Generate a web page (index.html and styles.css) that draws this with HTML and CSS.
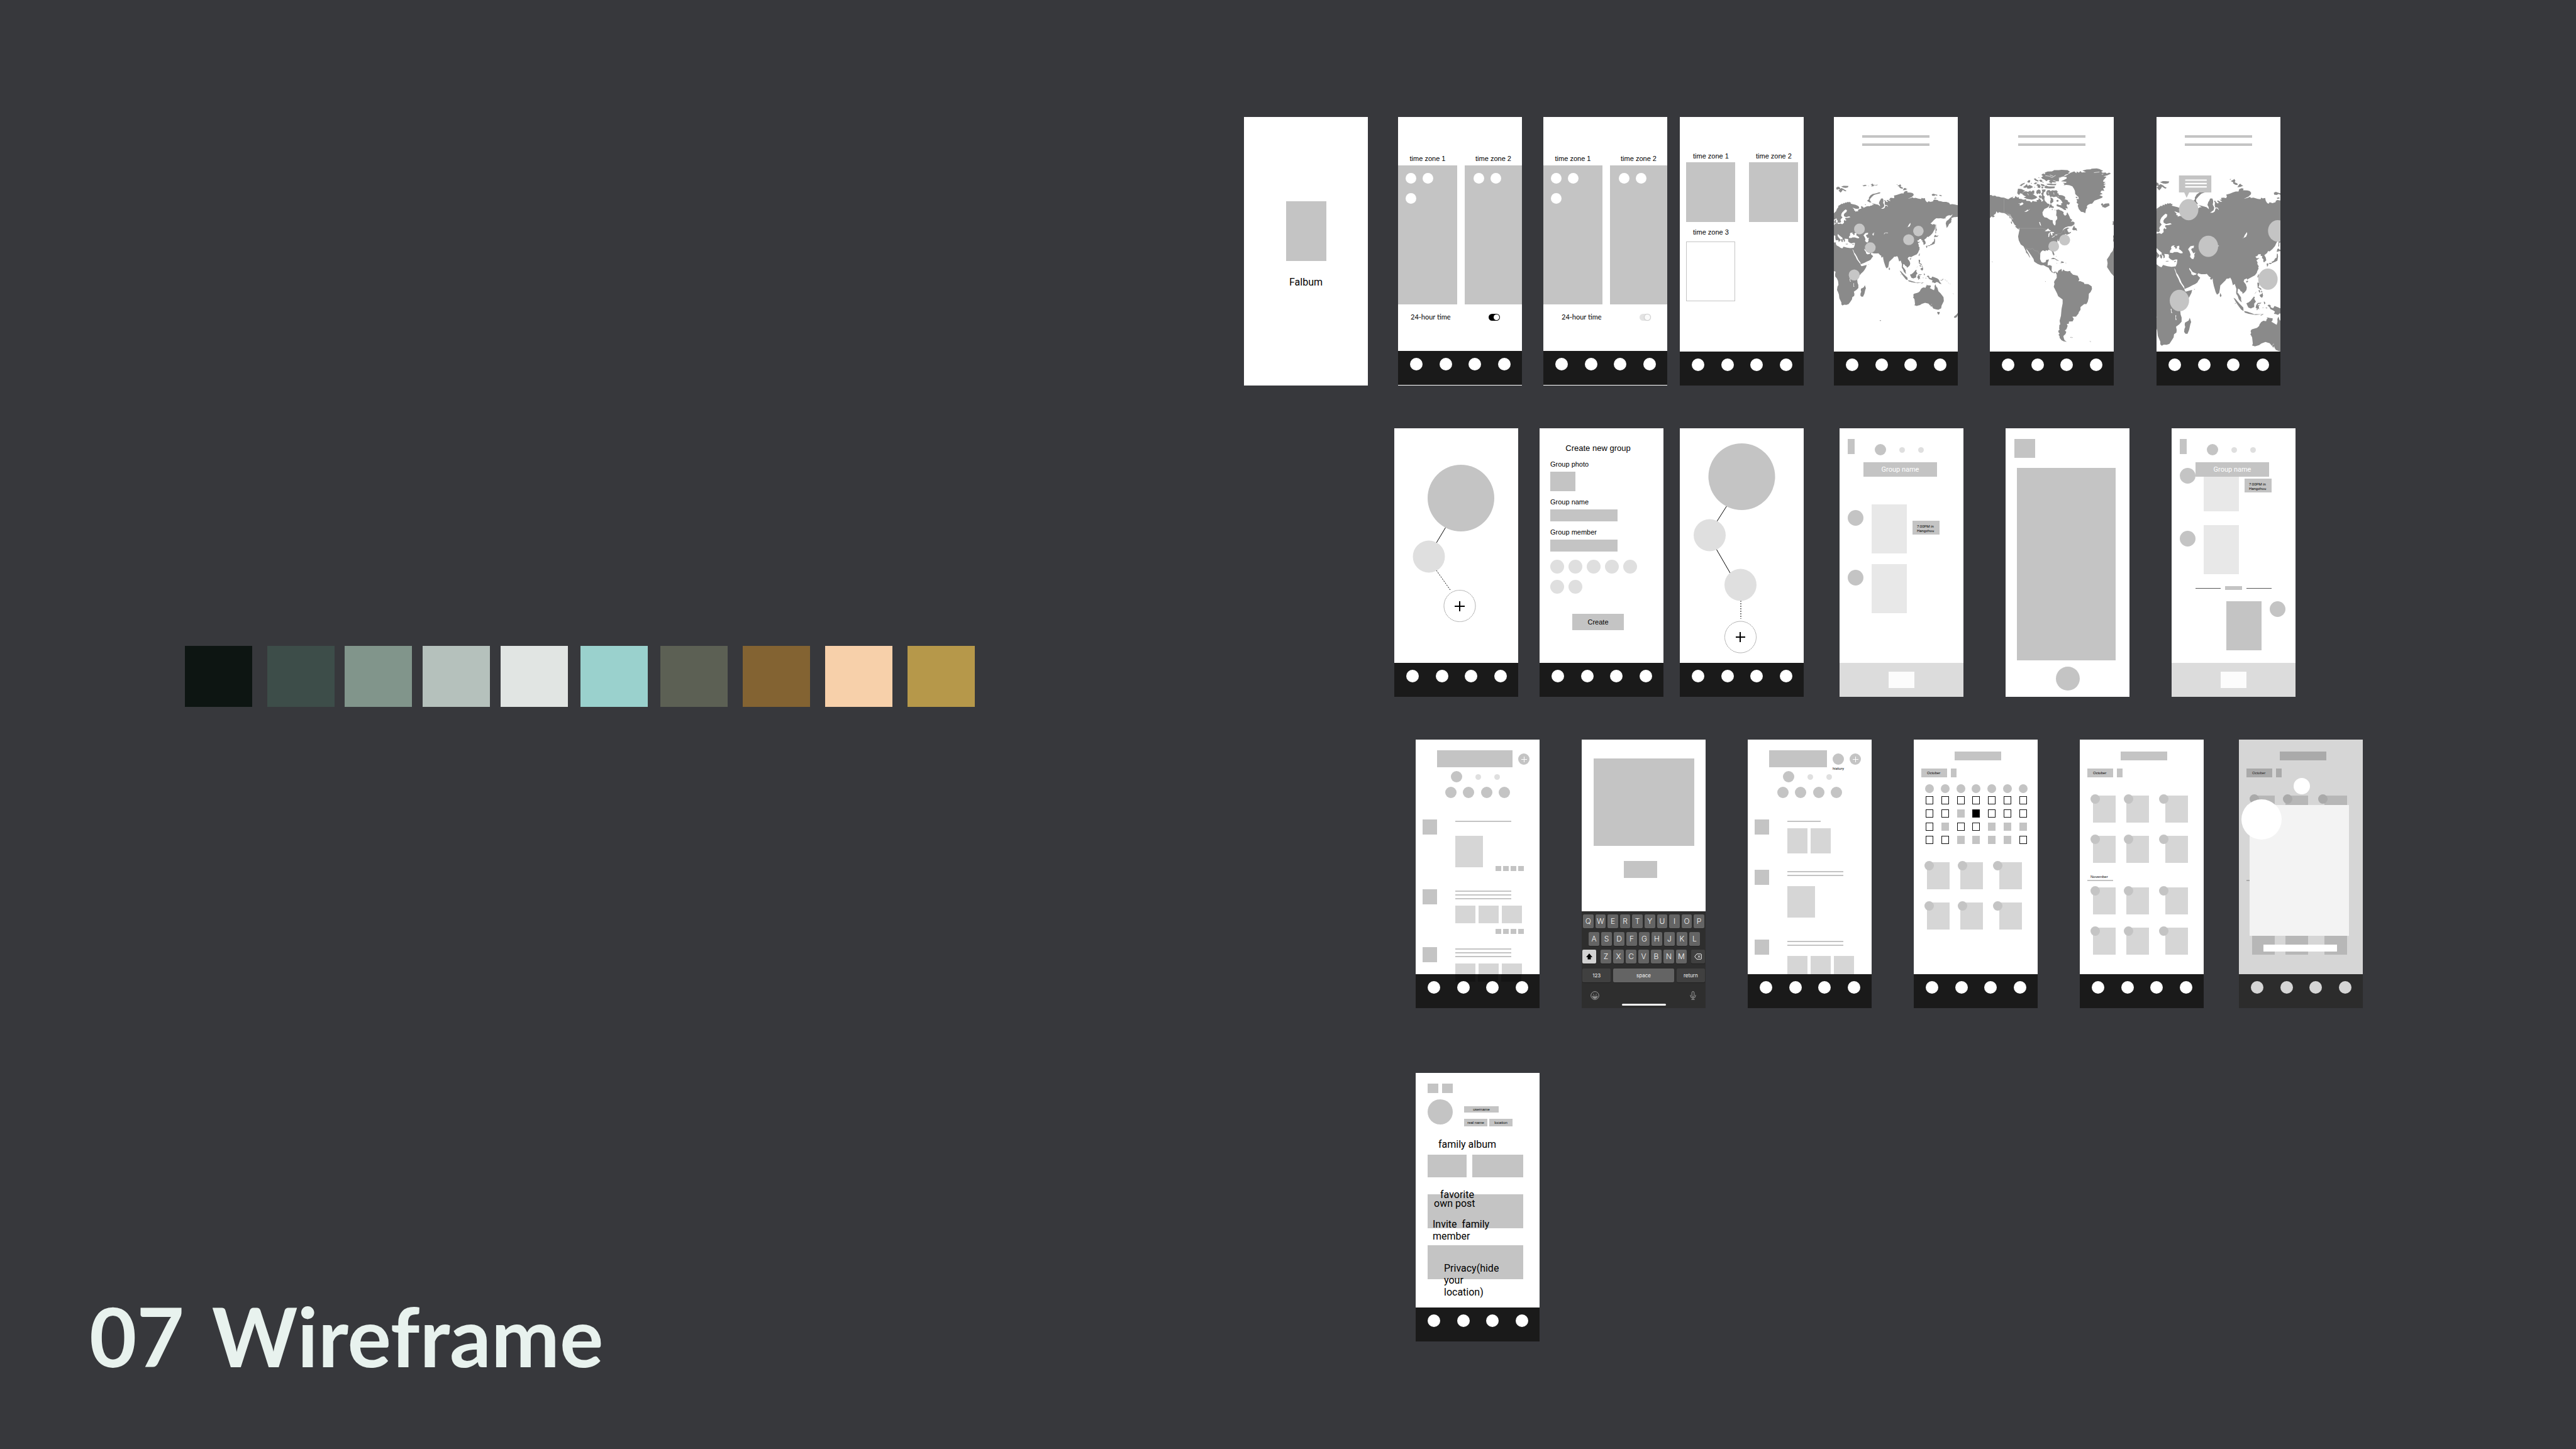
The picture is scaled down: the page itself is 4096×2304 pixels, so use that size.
FILE: index.html
```html
<!DOCTYPE html>
<html lang="en">
<head>
<meta charset="utf-8">
<title>07 Wireframe</title>
<meta name="viewport" content="width=device-width, initial-scale=1">
<link rel="stylesheet" href="styles.css">
</head>
<body>
<div class="page">
  <section class="intro">
    <ul class="palette" aria-label="Palette">
      <li class="ink"></li><li class="pine"></li><li class="sage"></li><li class="mist"></li><li class="fog"></li>
      <li class="aqua"></li><li class="moss"></li><li class="bronze"></li><li class="peach"></li><li class="gold"></li>
    </ul>
    <h1 class="title"><span>07</span> <span>Wireframe</span></h1>
  </section>

  <section class="board">
    <div class="row row-1">
      <!-- Splash -->
      <article class="screen">
        <main class="splash"><div class="fill logo"></div><p class="brand">Falbum</p></main>
      </article>

      <!-- Time zones -->
      <article class="screen hairline">
        <main class="zones">
          <div class="zone-columns">
            <section><h2 class="caption">time zone 1</h2><div class="zone-column"><i></i><i></i><i></i></div></section>
            <section><h2 class="caption">time zone 2</h2><div class="zone-column zone-right"><i></i><i></i></div></section>
          </div>
          <label class="setting">24-hour time <input type="checkbox" class="toggle" checked></label>
        </main>
        <nav class="tabs"><a href="#"></a><a href="#"></a><a href="#"></a><a href="#"></a></nav>
      </article>

      <article class="screen hairline">
        <main class="zones">
          <div class="zone-columns">
            <section><h2 class="caption">time zone 1</h2><div class="zone-column"><i></i><i></i><i></i></div></section>
            <section><h2 class="caption">time zone 2</h2><div class="zone-column zone-right"><i></i><i></i></div></section>
          </div>
          <label class="setting setting-muted">24-hour time <input type="checkbox" class="toggle"></label>
        </main>
        <nav class="tabs"><a href="#"></a><a href="#"></a><a href="#"></a><a href="#"></a></nav>
      </article>

      <article class="screen">
        <main class="zone-cards">
          <section><h2 class="caption">time zone 1</h2><div class="fill zone-card"></div></section>
          <section><h2 class="caption">time zone 2</h2><div class="fill zone-card"></div></section>
          <section class="empty"><h2 class="caption">time zone 3</h2><div class="zone-card"></div></section>
        </main>
        <nav class="tabs"><a href="#"></a><a href="#"></a><a href="#"></a><a href="#"></a></nav>
      </article>

      <!-- Maps -->
      <article class="screen">
        <main class="map-screen">
          <div class="heading-lines"><i></i><i></i></div>
          <svg class="map map-east" viewBox="3 0 1110 1290" aria-hidden="true">
            <defs>
              <g id="east">
                <path class="land" d="M0 290L22 270 30 250 45 230 38 226 60 212 75 202 82 206 90 195 98 200 105 190 115 194 122 186 132 190 140 185 148 191 158 192 152 202 168 206 195 212 215 220 228 230 230 242 222 248 200 248 175 240 170 240 185 252 184 262 197 268 192 275 206 270 222 269 218 258 236 250 250 246 246 232 248 222 258 228 268 232 262 240 275 237 292 228 300 225 310 224 325 226 330 220 345 218 350 212 365 212 352 204 340 198 365 203 385 208 400 212 417 226 414 210 406 198 412 180 420 168 425 156 440 155 446 165 447 180 444 195 455 215 450 232 430 245 425 248 445 248 458 240 462 228 465 218 480 222 484 232 486 224 478 214 462 214 458 200 460 182 453 174 460 168 468 180 478 188 488 184 474 172 482 168 500 178 512 176 492 164 508 162 502 152 520 150 540 153 545 142 540 130 565 124 590 115 608 110 628 110 632 96 650 88 664 92 660 102 690 103 708 107 718 118 716 128 700 143 665 158 690 152 710 145 716 152 735 150 765 158 785 160 790 150 800 155 818 152 822 170 832 185 842 190 850 180 870 186 892 180 894 170 905 165 935 170 940 178 962 180 980 186 1010 186 1035 195 1045 210 1062 206 1088 210 1113 216V320L1090 322 1078 322 1065 328 1056 330 1058 345 1054 352 1055 368 1045 378 1035 385 1025 405 1014 420 1010 400 1005 378 1012 358 1030 345 1045 328 1060 312 1066 296 1052 308 1035 306 1018 312 1002 324 1006 332 985 337 960 332 940 334 920 333 900 348 885 365 868 380 880 384 882 390 900 385 912 392 908 430 898 445 888 465 870 485 850 500 838 498 832 510 812 525 822 540 826 558 810 572 804 565 806 552 795 542 798 532 785 528 788 518 770 518 762 530 748 534 758 545 778 542 756 558 764 572 762 582 773 598 768 602 771 612 762 628 758 640 745 656 722 667 700 678 690 684 688 676 670 682 664 696 680 715 687 735 684 752 672 766 657 776 655 765 642 758 636 748 624 742 622 760 620 768 628 775 646 800 646 815 651 832 640 824 630 812 622 790 612 776 611 765 613 745 604 720 602 712 588 720 582 700 578 685 568 670 562 676 542 678 535 688 520 702 498 722 495 745 490 770 480 778 474 782 465 765 452 725 446 700 443 675 436 684 424 680 430 670 418 664 402 646 390 648 362 648 340 642 335 650 322 642 300 634 288 618 276 606 276 616 290 635 292 648 305 656 322 652 332 646 338 658 355 672 340 692 335 702 320 712 300 720 275 732 243 745 240 728 222 705 210 678 195 652 185 640 178 620 168 608 178 632 185 655 200 680 208 700 225 722 240 742 245 756 252 762 275 756 297 751 292 770 278 795 265 812 245 830 230 850 212 885 215 912 222 930 222 958 205 975 182 990 187 1012 185 1028 168 1040 165 1060 150 1082 135 1102 115 1108 95 1107 80 1114 70 1105 70 1088 52 1050 48 1015 40 995 31 975 35 945 44 930 40 895 30 872 15 855 14 835 18 812 3 806 0 806Z"/>
                <path class="sea" d="M0 490L8 486 16 490 16 510 20 530 38 528 46 535 44 548 64 530 60 520 48 508 36 490 38 474 50 484 62 495 80 508 80 522 92 530 92 545 102 540 102 528 98 516 128 518 132 526 130 540 145 552 160 558 180 552 192 553 188 580 180 597 150 600 120 596 90 588 78 603 60 596 50 588 28 576 20 560 22 550 0 550Z"/>
                <path class="land" d="M66 520L78 520 84 536 78 548 70 540ZM108 562L128 561 128 566 110 566ZM168 565L184 560 180 567 170 570Z"/>
                <path class="sea" d="M138 508L140 494 150 484 146 475 152 464 172 460 166 470 175 472 180 484 190 478 186 468 205 462 206 478 202 484 215 492 230 505 228 512 212 512 192 504 170 504 158 510ZM268 486L285 466 310 462 308 478 296 480 290 488 298 500 305 512 320 506 312 520 314 532 306 550 294 548 282 535 286 520 278 500ZM350 470L360 464 368 465 358 470 362 482 356 487 348 480ZM652 416L665 410 672 395 688 374 690 386 682 404 670 410ZM95 264L108 254 120 260 116 276 100 288 92 300 94 314 112 322 140 316 152 322 132 328 106 330 104 340 114 346 110 356 98 348 92 358 94 374 78 386 62 380 44 384 40 380 12 382 8 392 0 392V344L12 344 25 332 30 346 36 352 38 372 60 374 68 362 62 350 66 340 80 325 68 312 70 295 78 280ZM144 875L150 874 150 890 156 902 148 900ZM178 914L184 918 181 930 186 946 179 946Z"/>
                <path class="land" d="M6 356L18 346 24 350 20 360 22 374 8 380ZM24 372L36 368 34 382 26 384Z"/>
                <path class="thin-sea" d="M454 476L456 466 462 465 468 463 488 464"/>
                <path class="land" d="M22 60L40 50 55 55 60 68 72 62 90 70 100 78 116 86 106 92 92 84 82 78 76 90 62 103 52 92 44 84 58 74 44 72 30 78ZM68 50L88 42 104 42 134 44 128 56 108 60 90 58ZM258 38L275 36 282 32 300 40 284 44 270 46ZM332 30L352 22 356 32 380 34 396 31 390 38 362 36 356 46 334 47 346 38ZM308 44L316 42 316 46ZM300 176L318 160 316 150 330 128 350 116 378 110 410 100 422 104 414 110 380 118 362 124 345 140 326 160 326 174 340 192 322 190ZM564 30L575 28 570 34ZM572 42L590 34 598 28 606 40 600 50 620 58 622 68 605 66 590 58 590 50ZM620 82L632 64 642 60 650 68 662 72 640 80ZM880 118L894 112 912 118 930 122 928 132 914 126 900 132 882 130ZM942 126L960 124 974 132 958 134ZM900 152L915 148 924 154 906 158ZM278 210L290 208 288 216ZM912 392L918 388 918 410 922 430 928 440 918 445 918 468 912 468 914 430ZM905 484L915 482 922 490 942 486 930 498 912 500 900 504ZM902 514L908 516 910 535 905 560 890 568 878 572 870 576 862 570 880 560 890 545 900 540ZM828 580L842 578 838 594 832 600ZM846 576L868 574 860 582 846 582ZM768 650L774 650 768 670 762 668ZM682 694L695 690 696 698 685 704ZM762 704L774 704 776 720 770 732 782 738 792 745 788 752 775 742 765 738ZM778 784L790 778 800 770 803 790 796 802 784 796ZM770 755L778 750 784 768 776 766ZM740 780L756 760 752 768ZM790 755L798 762 796 770 788 760ZM498 770L507 788 500 798 494 790ZM592 802L605 808 620 825 640 845 662 865 664 888 648 880 630 858 612 835ZM604 834L608 840 602 842ZM668 888L690 892 706 897 722 902 740 910 756 908 780 910 808 907 790 918 782 920 796 910 750 914 735 912 700 906 672 898ZM684 838L700 832 715 820 725 808 738 794 745 798 740 808 752 828 740 840 740 862 725 868 716 872 698 866 690 850ZM754 850L765 836 792 834 785 840 768 842 764 852 782 846 772 856 774 868 776 880 766 870 764 880 758 884 758 870 750 868ZM808 828L814 828 820 838 812 845ZM798 866L806 864 804 870ZM818 868L832 866 832 872ZM834 852L845 846 856 850 858 864 875 870 885 855 905 862 930 872 945 885 950 900 968 922 950 918 935 906 920 904 910 914 895 908 880 906 888 892 875 884 855 876 848 862ZM952 886L970 886 984 872 982 882 968 892ZM996 880L1006 886 1000 888ZM1012 892L1022 898 1014 898ZM1026 908L1034 914 1028 914ZM1040 916L1050 926 1044 922ZM714 1018L722 1008 760 998 775 985 778 975 790 960 805 952 825 955 828 942 842 932 872 936 870 950 862 958 885 970 900 978 906 960 905 940 913 924 920 945 930 955 940 988 958 1005 985 1040 988 1075 968 1115 964 1140 940 1152 920 1150 895 1142 885 1128 878 1100 866 1115 850 1098 820 1090 790 1100 775 1110 745 1118 724 1112 730 1102 725 1060 718 1048 712 1040 718 1032ZM830 930L848 932 832 936ZM928 1172L952 1172 948 1190 940 1197 932 1188ZM868 1116L876 1104 884 1112 876 1128ZM1113 1180L1100 1198 1082 1212 1078 1222 1090 1226 1104 1218 1113 1200ZM1062 1000L1082 1016 1074 1012ZM412 1246L424 1246 426 1252 416 1253ZM246 964L262 956 272 950 280 932 290 960 284 975 276 1010 264 1036 250 1036 240 1024 242 1005 248 992 244 978ZM308 746L318 746 314 750Z"/>
              </g>
            </defs>
            <use href="#east"/>
            <g class="pin"><circle cx="232" cy="429" r="48"/><circle cx="760" cy="447" r="47"/><circle cx="673" cy="525" r="49"/><circle cx="329" cy="596" r="48"/><circle cx="185" cy="841" r="49"/></g>
          </svg>
        </main>
        <nav class="tabs"><a href="#"></a><a href="#"></a><a href="#"></a><a href="#"></a></nav>
      </article>

      <article class="screen">
        <main class="map-screen">
          <div class="heading-lines"><i></i><i></i></div>
          <svg class="map map-west" viewBox="3 0 1110 1651" aria-hidden="true">
            <path class="land" d="M0 250L15 248 28 256 50 254 62 262 85 264 105 270 130 272 150 280 168 286 190 272 215 264 205 278 225 274 232 258 250 272 262 266 262 280 290 284 300 290 330 288 328 300 360 302 375 315 388 300 400 306 425 308 420 296 440 290 440 276 452 284 466 298 465 310 478 302 486 268 496 300 520 325 536 328 536 345 520 360 505 368 492 374 482 390 474 405 478 430 492 448 515 452 528 462 545 472 565 474 568 500 576 514 586 522 592 508 592 480 607 464 606 442 597 432 600 400 597 382 620 378 635 386 648 390 664 402 662 418 676 434 690 426 692 410 697 405 706 420 720 448 722 458 742 472 728 488 748 486 762 494 760 512 735 528 705 530 680 538 665 550 652 568 672 552 688 544 706 540 708 548 696 556 700 572 712 586 732 578 728 588 705 598 690 606 685 596 660 612 645 635 630 640 625 655 612 665 615 640 606 660 608 680 595 700 575 735 572 755 582 780 577 792 566 778 562 758 545 744 530 738 520 748 505 742 500 752 478 744 462 756 455 770 453 822 465 850 480 855 502 850 508 830 533 826 528 840 522 855 520 880 540 876 558 884 556 925 570 942 582 936 598 935 606 950 618 925 645 910 650 935 662 915 675 928 700 932 722 928 728 942 748 962 768 966 790 972 805 1005 796 1022 812 1020 845 1032 850 1045 885 1046 915 1066 918 1092 905 1118 890 1132 888 1170 880 1205 868 1225 848 1226 815 1252 815 1278 800 1298 798 1308 775 1338 742 1338 755 1358 745 1380 712 1382 710 1402 692 1405 700 1420 690 1450 675 1462 688 1475 680 1495 662 1512 665 1530 672 1550 692 1563 665 1560 645 1550 628 1528 628 1515 618 1500 628 1490 616 1475 620 1458 630 1455 624 1448 626 1412 634 1408 628 1375 640 1330 645 1270 655 1220 655 1185 615 1155 605 1130 585 1090 575 1070 582 1045 578 1030 582 1018 602 990 602 962 590 940 578 952 575 945 560 942 540 920 530 900 510 892 485 878 460 878 430 865 400 845 395 822 370 785 345 750 330 730 332 745 350 775 365 810 358 806 340 775 328 766 325 750 312 722 305 708 280 692 262 655 256 620 262 590 268 562 245 545 228 530 240 525 225 515 210 490 200 480 196 462 180 455 178 440 160 430 150 420 130 410 110 408 85 402 75 412 62 395 55 415 35 430 48 440 30 450 20 440 0 457Z"/>
            <path class="land" d="M190 488L198 486 203 500 196 508ZM640 125L668 112 692 100 690 88 660 84 700 66 725 50 760 36 778 54 782 38 800 48 815 34 826 46 865 44 832 30 870 20 905 18 915 12 960 10 985 15 1018 33 1000 40 1014 50 1040 46 1050 56 1072 48 1088 56 1060 70 1020 82 1048 84 1030 105 1020 115 1018 130 1040 132 1020 145 1044 150 1020 160 1036 168 1035 185 1018 188 1028 212 1005 208 992 225 1014 238 985 250 1014 262 1010 272 980 285 940 298 920 325 900 328 880 338 872 350 875 365 865 375 858 412 840 402 820 398 800 375 790 345 796 330 780 318 785 300 778 285 800 285 796 265 780 252 768 240 765 212 755 190 742 170 715 160 690 158 664 160 672 148 655 140 685 140 690 130ZM770 268L784 264 790 274 776 275ZM462 92L480 80 464 68 480 56 500 62 495 48 520 38 560 36 580 26 620 25 645 22 700 26 722 42 705 50 712 58 680 66 660 85 640 92 622 100 622 126 600 125 590 136 562 134 555 145 530 130 545 118 525 112 510 125 492 110 475 104ZM510 150L545 145 570 150 600 148 592 160 560 160 520 158ZM490 178L505 164 530 172 586 172 582 188 540 190 500 188ZM458 150L480 152 500 165 480 170 462 162ZM468 170L484 178 476 190 464 186ZM428 150L450 155 458 175 450 186 430 182 432 168 420 162ZM396 104L410 98 425 112 440 118 436 128 412 120ZM444 115L460 110 474 120 472 132 455 130ZM436 90L446 90 444 98ZM338 128L350 116 365 116 362 135 345 138ZM268 165L290 148 318 138 312 150 290 160 295 168ZM300 178L318 165 335 150 342 168 358 158 380 168 390 178 365 190 340 192 335 180 315 184ZM368 142L380 140 378 148ZM395 148L405 140 420 134 425 144 412 152ZM398 178L408 176 406 184ZM428 138L436 136 434 142ZM475 132L484 130 480 144ZM255 192L285 194 320 212 302 220 292 238 275 232 264 250 248 232ZM292 240L302 222 325 214 345 220 365 208 372 220 390 206 402 212 400 238 386 240 402 250 430 268 410 282 380 290 340 285 305 270 328 262 308 254ZM422 208L440 198 455 204 460 225 450 240 438 232 430 242 418 230ZM468 200L502 198 500 216 486 226 482 250 495 262 490 285 472 290 464 270 470 248 462 235 474 222ZM440 258L455 250 465 262 460 280 446 272ZM510 218L520 206 538 204 548 214 562 206 578 208 600 206 612 220 605 230 622 238 618 248 640 250 655 252 675 262 680 278 672 284 700 296 705 310 722 318 710 336 695 330 690 345 698 356 700 370 680 365 688 384 670 382 650 368 625 355 612 352 600 345 604 330 625 338 645 340 640 325 655 318 645 300 630 285 612 275 598 262 575 268 560 262 545 268 535 250 520 255 508 240ZM600 296L612 290 620 300 612 310 600 306ZM542 310L548 290 545 270 560 275 570 285 572 308 560 318 548 328ZM540 335L552 330 560 345 578 355 572 365 545 360 530 368ZM556 376L568 374 562 384ZM582 380L590 382 584 388ZM998 336L1005 322 1018 326 1016 336 1035 325 1070 322 1076 342 1050 356 1035 363 1018 356 1008 356 1012 346ZM740 556L748 540 758 520 764 540 780 548 784 570 770 562 755 565ZM690 602L700 590 730 580 714 596ZM704 545L718 544 712 550ZM548 822L570 810 590 818 605 828 625 838 604 836 586 822ZM630 858L645 852 638 842 660 845 668 855 648 858ZM596 856L608 856 604 860ZM678 855L690 856 684 859ZM594 792L600 802 596 800ZM22 842L30 848 24 850ZM4 827L8 829 5 830ZM497 1018L503 1022 501 1028ZM724 1522L734 1520 730 1530ZM736 1525L748 1522 740 1530ZM894 1554L908 1562 906 1566ZM1113 715L1104 750 1085 770 1076 790 1052 825 1058 860 1053 895 1070 920 1088 948 1113 975ZM1113 484L1102 484 1106 498 1100 514 1113 516ZM1113 612L1106 612 1110 640 1106 655 1113 672Z"/>
            <path class="sea" d="M256 326L280 322 292 314 305 324 298 334 280 342 268 340 275 330ZM312 398L335 384 336 378 345 384 364 374 345 390 330 398ZM444 492L452 490 460 515 462 528 452 515ZM494 572L510 560 525 548 536 560 548 566 545 574 525 570 515 574ZM528 596L540 584 555 578 578 582 578 592 568 588 562 595 566 608 556 612 550 600 548 586 540 592 534 622 526 625ZM556 628L575 618 585 610 582 620 566 630ZM585 606L610 602 604 608 588 610Z"/>
            <path class="thin-sea" d="M500 75L535 80 560 92 592 72M540 68L570 80M620 96L660 84M570 118L600 128M162 420L185 440 196 470M180 420L208 468M264 545L266 566M936 48L985 42M1005 64L1020 60M524 222L530 240M575 225L578 245M340 232L350 250M610 258L620 268"/>
            <path class="border" d="M130 272V408L150 408 180 420 212 465M268 547H470L480 550 512 558M586 598L640 594 660 565H672L676 590M308 720L340 728 370 734 385 725 405 748 430 750 452 782"/>
            <g class="pin"><circle cx="673" cy="651" r="49"/><circle cx="575" cy="708" r="48"/></g>
          </svg>
        </main>
        <nav class="tabs"><a href="#"></a><a href="#"></a><a href="#"></a><a href="#"></a></nav>
      </article>

      <article class="screen">
        <main class="map-screen">
          <div class="heading-lines"><i></i><i></i></div>
          <svg class="map map-close" viewBox="0 0 1110 1583" aria-hidden="true">
            <use href="#east" transform="matrix(1.256 0 0 1.376 -54 -2)"/>
            <g class="bubble">
              <path d="M201 6H491V158H293L270 206 248 158H201Z"/>
              <ellipse cx="288" cy="312" rx="87" ry="95"/><ellipse cx="464" cy="640" rx="88" ry="95"/><ellipse cx="1087" cy="502" rx="88" ry="96"/><ellipse cx="998" cy="935" rx="87" ry="95"/><ellipse cx="205" cy="1126" rx="87" ry="96"/>
            </g>
            <path class="sea" d="M257 42H450V54H257ZM257 72H450V84H257ZM257 102H450V114H257Z"/>
          </svg>
        </main>
        <nav class="tabs"><a href="#"></a><a href="#"></a><a href="#"></a><a href="#"></a></nav>
      </article>
    </div>

    <div class="row row-2">
      <!-- Family tree -->
      <article class="screen">
        <main>
          <svg class="tree" viewBox="0 0 197 373" aria-hidden="true">
            <path class="link" d="M82 157L67 182"/><path class="link dashed" d="M67 226L89 257"/>
            <circle class="root" cx="106" cy="111" r="53"/><circle class="child" cx="55" cy="204" r="25.5"/>
            <circle class="add" cx="104" cy="282.5" r="25"/><path class="plus" d="M96 283H112M104 275V291"/>
          </svg>
        </main>
        <nav class="tabs"><a href="#"></a><a href="#"></a><a href="#"></a><a href="#"></a></nav>
      </article>

      <!-- New group -->
      <article class="screen">
        <main>
          <form class="group-form">
            <h2 class="form-title">Create new group</h2>
            <label for="photo">Group photo</label><button type="button" id="photo" class="fill photo"></button>
            <label for="name">Group name</label><input type="text" id="name" class="fill field">
            <label for="member">Group member</label><input type="text" id="member" class="fill field">
            <div class="members"><i></i><i></i><i></i><i></i><i></i><i></i><i></i></div>
            <button type="button" class="fill create">Create</button>
          </form>
        </main>
        <nav class="tabs"><a href="#"></a><a href="#"></a><a href="#"></a><a href="#"></a></nav>
      </article>

      <article class="screen">
        <main>
          <svg class="tree" viewBox="0 0 197 373" aria-hidden="true">
            <path class="link" d="M75 123L59 148M58 192L80 230"/><path class="link dashed" d="M97 274V303"/>
            <circle class="root" cx="98.5" cy="77" r="53"/><circle class="child" cx="47.5" cy="170" r="25.5"/><circle class="child" cx="96.5" cy="249" r="25.5"/>
            <circle class="add" cx="96.5" cy="332" r="25"/><path class="plus" d="M89 332H104M96 324V340"/>
          </svg>
        </main>
        <nav class="tabs"><a href="#"></a><a href="#"></a><a href="#"></a><a href="#"></a></nav>
      </article>

      <!-- Group chat -->
      <article class="screen">
        <main class="chat">
          <header><i class="fill back"></i><div class="pager"><i></i><i></i><i></i></div></header>
          <h2 class="fill group-name">Group name</h2>
          <div class="message first"><i class="fill avatar"></i><i class="picture"></i><p class="fill stamp">7:00PM in<br>Hangzhou</p></div>
          <div class="message second"><i class="fill avatar"></i><i class="picture"></i></div>
        </main>
        <footer class="composer"><button type="button"></button></footer>
      </article>

      <article class="screen">
        <main class="camera"><div class="fill close"></div><div class="fill finder"></div><button type="button" class="fill shutter"></button></main>
      </article>

      <article class="screen">
        <main class="chat">
          <header><i class="fill back"></i><div class="pager"><i></i><i></i><i></i></div></header>
          <h2 class="fill group-name">Group name</h2>
          <div class="message tucked"><i class="fill avatar"></i><i class="picture"></i><p class="fill stamp">7:00PM in<br>Hangzhou</p></div>
          <div class="message third"><i class="fill avatar"></i><i class="picture"></i></div>
          <div class="divider"><hr><i class="fill"></i><hr></div>
          <div class="message own"><i class="fill picture"></i><i class="fill avatar"></i></div>
        </main>
        <footer class="composer"><button type="button"></button></footer>
      </article>
    </div>

    <div class="row row-3">
      <!-- Feed -->
      <article class="screen">
        <main class="feed">
          <header><input type="search" class="fill search" aria-label="Search"><button type="button" class="fill add-post"></button></header>
          <div class="pager"><i></i><i></i><i></i></div>
          <div class="stories"><i></i><i></i><i></i><i></i></div>
          <div class="post"><i class="fill face"></i><div class="body"><i class="line"></i><div class="shots single"><i class="tall"></i><div class="tags"><i></i><i></i><i></i><i></i></div></div></div></div>
          <div class="post after-tall"><i class="fill face"></i><div class="body"><i class="line"></i><i class="line"></i><i class="line"></i><div class="shots"><i></i><i></i><i></i></div><div class="tags below"><i></i><i></i><i></i><i></i></div></div></div>
          <div class="post after-tags"><i class="fill face"></i><div class="body"><i class="line"></i><i class="line"></i><i class="line"></i><div class="shots"><i></i><i></i><i></i></div></div></div>
        </main>
        <nav class="tabs shaded"><a href="#"></a><a href="#"></a><a href="#"></a><a href="#"></a></nav>
      </article>

      <!-- Compose with keyboard -->
      <article class="screen">
        <main class="compose"><div class="fill canvas"></div><div class="fill send"></div></main>
        <div class="keyboard">
          <div class="keys"><button>Q</button><button>W</button><button>E</button><button>R</button><button>T</button><button>Y</button><button>U</button><button>I</button><button>O</button><button>P</button></div>
          <div class="keys home-row"><button>A</button><button>S</button><button>D</button><button>F</button><button>G</button><button>H</button><button>J</button><button>K</button><button>L</button></div>
          <div class="keys shift-row">
            <button class="shift" aria-label="Shift"><svg viewBox="0 0 12 10" width="12" height="10"><path d="M6 0L11 6H8.500V9.500H3.500V6H1Z"/></svg></button>
            <div class="keys letters"><button>Z</button><button>X</button><button>C</button><button>V</button><button>B</button><button>N</button><button>M</button></div>
            <button class="dark erase" aria-label="Delete"><svg viewBox="0 0 12 10" width="12" height="10"><path d="M4 .8H10.500Q11.300 .8 11.300 1.600V8.400Q11.300 9.200 10.500 9.200H4L.7 5ZM5.800 3.200L9.200 6.800M9.200 3.200L5.800 6.800"/></svg></button>
          </div>
          <div class="keys last-row"><button class="dark">123</button><button class="space">space</button><button class="dark">return</button></div>
          <div class="extras">
            <svg viewBox="0 0 14 14" width="14" height="14"><circle cx="7" cy="7" r="6.300"/><path d="M3 8H11Q10.500 11.500 7 11.500 3.500 11.500 3 8Z"/><path class="solid" d="M3.500 9.200H10.500Q9.500 11.300 7 11.300 4.500 11.300 3.500 9.200Z"/><circle class="solid" cx="5" cy="5" r=".8"/><circle class="solid" cx="9" cy="5" r=".8"/></svg>
            <svg viewBox="0 0 10 14" width="10" height="14"><rect x="3.200" y=".6" width="3.600" height="8.400" rx="1.800"/><path d="M1 6V7.500Q1 10.800 5 10.800 9 10.800 9 7.500V6M5 10.800V13.200M2.300 13.200H7.700"/></svg>
          </div>
          <div class="home-bar"></div>
        </div>
      </article>

      <article class="screen">
        <main class="feed">
          <header><input type="search" class="fill search narrow" aria-label="Search"><button type="button" class="fill history"><span>history</span></button><button type="button" class="fill add-post"></button></header>
          <div class="pager"><i></i><i></i><i></i></div>
          <div class="stories"><i></i><i></i><i></i><i></i></div>
          <div class="post"><i class="fill face"></i><div class="body"><i class="line short"></i><div class="shots high"><i></i><i></i></div></div></div>
          <div class="post after-high"><i class="fill face"></i><div class="body"><i class="line"></i><i class="line"></i><div class="shots loose"><i class="tall"></i></div></div></div>
          <div class="post after-tall"><i class="fill face"></i><div class="body"><i class="line"></i><i class="line"></i><div class="shots loose high"><i></i><i></i><i></i></div></div></div>
        </main>
        <nav class="tabs"><a href="#"></a><a href="#"></a><a href="#"></a><a href="#"></a></nav>
      </article>

      <!-- Calendar -->
      <article class="screen">
        <main class="album">
          <div class="fill album-title"></div>
          <div class="month"><span class="fill month-name">October</span><i class="fill"></i></div>
          <div class="calendar">
            <i class="day"></i><i class="day"></i><i class="day"></i><i class="day"></i><i class="day"></i><i class="day"></i><i class="day"></i>
            <i></i><i></i><i></i><i></i><i></i><i></i><i></i>
            <i></i><i></i><i class="on"></i><i class="today"></i><i></i><i></i><i></i>
            <i></i><i class="on"></i><i></i><i></i><i class="on"></i><i class="on"></i><i class="on"></i>
            <i></i><i></i><i class="on"></i><i class="on"></i><i class="on"></i><i class="on"></i><i></i>
          </div>
          <div class="gallery"><i></i><i></i><i></i><i></i><i></i><i></i></div>
        </main>
        <nav class="tabs"><a href="#"></a><a href="#"></a><a href="#"></a><a href="#"></a></nav>
      </article>

      <article class="screen">
        <main class="album">
          <div class="fill album-title"></div>
          <div class="month"><span class="fill month-name">October</span><i class="fill"></i></div>
          <div class="gallery"><i></i><i></i><i></i><i></i><i></i><i></i></div>
          <h3 class="month-rule">November</h3>
          <div class="gallery close-up"><i></i><i></i><i></i><i></i><i></i><i></i></div>
        </main>
        <nav class="tabs"><a href="#"></a><a href="#"></a><a href="#"></a><a href="#"></a></nav>
      </article>

      <article class="screen">
        <main class="album">
          <div class="fill album-title"></div>
          <div class="month"><span class="fill month-name">October</span><i class="fill"></i></div>
          <div class="gallery"><i></i><i></i><i></i><i></i><i></i><i></i></div>
          <h3 class="month-rule">November</h3>
          <div class="gallery close-up"><i></i><i></i><i></i><i></i><i></i><i></i></div>
        </main>
        <nav class="tabs"><a href="#"></a><a href="#"></a><a href="#"></a><a href="#"></a></nav>
        <div class="overlay"><i class="dialog"></i><i class="portrait"></i><i class="badge"></i><i class="reply"></i></div>
      </article>
    </div>

    <div class="row row-4">
      <!-- Profile -->
      <article class="screen">
        <main class="profile">
          <div class="icons"><i class="fill"></i><i class="fill"></i></div>
          <div class="person">
            <i class="fill head"></i>
            <div class="names"><span class="fill user">username</span><span class="fill">real name</span><span class="fill">location</span></div>
          </div>
          <h2 class="text">family album</h2>
          <div class="albums"><i class="fill"></i><i class="fill"></i></div>
          <div class="fill panel"><p class="text favorite">favorite</p><p class="text own-post">own post</p><p class="text invite">Invite  family
member</p></div>
          <div class="fill panel"><p class="text privacy">Privacy(hide
your
location)</p></div>
        </main>
        <nav class="tabs"><a href="#"></a><a href="#"></a><a href="#"></a><a href="#"></a></nav>
      </article>
    </div>
  </section>
</div>
</body>
</html>
```
FILE: styles.css
```css
*, *::before, *::after { box-sizing: border-box; }
body { margin: 0; background: #37383c; color: #000; font-family: "Liberation Sans", Arial, sans-serif; }
h1, h2, h3, p, ul { margin: 0; padding: 0; font-weight: 400; }
ul { list-style: none; }
button, input { margin: 0; padding: 0; border: 0; border-radius: 0; font: inherit; color: inherit; appearance: none; }
button, i { display: block; flex: none; }
svg { display: block; }
.fill { background: #c4c4c4; }

.page { display: grid; grid-template-columns: 1978fr 2118fr; min-height: 100vh; }

/* Left side */
.intro { display: flex; flex-direction: column; justify-content: space-between; padding: 1027px 0 102px 142px; }
.palette { display: flex; padding-left: 152px; }
.palette li { width: 107px; height: 97px; margin-right: 24px; }
.palette .ink { background: #0d1512; }
.palette .pine { background: #3d4d49; margin-right: 16px; }
.palette .sage { background: #81958b; margin-right: 17px; }
.palette .mist { background: #b5c1bc; margin-right: 17px; }
.palette .fog { background: #e1e5e3; margin-right: 20px; }
.palette .aqua { background: #9ad1cd; margin-right: 20px; }
.palette .moss { background: #5c6054; }
.palette .bronze { background: #836332; }
.palette .peach { background: #f7d0aa; }
.palette .gold { background: #b6984a; margin-right: 0; }
.title { display: flex; gap: 44px; font-family: Lato, "Open Sans", sans-serif; font-weight: 700; font-size: 130px; line-height: 156px; color: #e8f2ee; }

/* Board */
.board { display: flex; flex-direction: column; gap: 68px; padding: 186px 0 170px; }
.row { display: flex; align-items: flex-start; }
.row-1 { gap: 48px; }
.row-1 .screen:nth-child(3) { margin-left: -14px; }
.row-1 .screen:nth-child(4) { margin-left: -28px; }
.row-1 .screen:nth-child(6) { margin-left: 3px; }
.row-1 .screen:nth-child(7) { margin-left: 20px; }
.row-2 { gap: 67px; padding-left: 239px; }
.row-2 .screen:nth-child(2) { margin-left: -33px; }
.row-2 .screen:nth-child(3) { margin-left: -41px; }
.row-2 .screen:nth-child(4) { margin-left: -10px; }
.row-3 { gap: 67px; padding-left: 273px; }
.row-3 .screen:nth-child(6) { margin-left: -11px; }
.row-4 { padding: 35px 0 0 273px; }

.screen { position: relative; display: flex; flex: none; flex-direction: column; width: 197px; height: 427px; background: #fff; }
.screen > main { flex: 1; min-height: 0; overflow: hidden; }
.hairline { padding-bottom: 1px; }
.tabs { display: flex; flex: none; justify-content: space-between; height: 54px; padding: 11px 18px 0 19px; background: #1a1a1a; }
.tabs a { width: 20px; height: 20px; border-radius: 50%; background: #fff; }
.tabs.shaded {
  background:
    linear-gradient(#141414, #141414) 63px 0 / 32px 12px no-repeat,
    linear-gradient(#141414, #141414) 99px 0 / 32px 12px no-repeat,
    linear-gradient(#141414, #141414) 136px 0 / 32px 12px no-repeat,
    #1a1a1a;
}

/* Splash */
.splash { display: flex; flex-direction: column; align-items: center; gap: 24px; padding-top: 134px; }
.logo { width: 64px; height: 95px; }
.brand, .text { font-family: Roboto, sans-serif; font-size: 16px; line-height: 19px; }

/* Time zones */
.caption { font-size: 11px; line-height: 12px; }
.zones { padding-top: 60px; }
.zone-columns { display: grid; grid-template-columns: 94px 91px; gap: 12px; text-align: center; }
.zone-column { display: grid; grid-template-columns: 17px 17px; grid-auto-rows: 17px; gap: 15px 10px; height: 221px; margin-top: 5px; padding: 12px; background: #c4c4c4; }
.zone-right { padding-left: 14px; }
.zone-column i { border-radius: 50%; background: #fff; }
.setting { display: flex; align-items: center; justify-content: space-between; margin-top: 14px; padding: 0 35px 0 20px; font-family: Lato, sans-serif; font-size: 11px; line-height: 12px; }
.setting-muted { padding: 0 26px 0 29px; }
.toggle { display: flex; justify-content: flex-end; width: 18px; height: 11px; padding: 1px; border-radius: 6px; background: #e3e3e3; }
.toggle::before { content: ""; width: 9px; height: 9px; border-radius: 50%; background: #fafafa; box-shadow: 0 0 1px 1px #ccc; }
.toggle:checked { background: #000; }
.toggle:checked::before { background: #fff; box-shadow: none; }
.zone-cards { display: grid; grid-template-columns: 78px 78px; gap: 10px 22px; align-content: start; padding: 56px 0 0 10px; }
.zone-cards .caption { padding-left: 11px; }
.zone-card { height: 95px; margin-top: 4px; }
.empty .zone-card { margin-top: 9px; border: 1px solid #c4c4c4; }

/* Maps */
.heading-lines { display: grid; gap: 9px; width: 107px; margin-left: 45px; padding-top: 29px; }
.heading-lines i { height: 4px; background: #c4c4c4; }
.map { width: 100%; height: auto; }
.map-east { margin-top: 56px; }
.map-west { margin-top: 34px; }
.map-close { margin-top: 46px; }
.land { fill: #8a8a8a; }
.sea { fill: #fff; }
.thin-sea { fill: none; stroke: #fff; stroke-width: 4; }
.border { fill: none; stroke: #a6a6a6; stroke-width: 3; }
.pin { fill: #c6c6c6; }
.bubble { fill: #c4c4c4; }

/* Family tree */
.tree { width: 100%; height: auto; fill: none; stroke: #000; }
.tree .root { fill: #c4c4c4; stroke: none; }
.tree .child { fill: #dfdfdf; stroke: none; }
.tree .dashed { stroke-dasharray: 2 2; }
.tree .add { stroke-dasharray: 1 1; stroke-width: .6; }
.tree .plus { stroke-width: 2; }

/* New group */
.group-form { display: flex; flex-direction: column; align-items: flex-start; padding: 24px 28px 0 17px; font-size: 11px; line-height: 12px; }
.group-form label { margin: 11px 0 6px; }
.form-title { align-self: center; font-size: 13px; line-height: 16px; }
.photo { width: 40px; height: 31px; }
.field { width: 107px; height: 19px; }
.members { display: grid; grid-template-columns: repeat(5, 22px); grid-auto-rows: 22px; gap: 10px 7px; margin-top: 13px; }
.members i { border-radius: 50%; background: #dfdfdf; }
.create { align-self: center; width: 82px; height: 26px; margin-top: 32px; }

/* Chat */
.pager { display: flex; align-items: center; gap: 21px; }
.pager i { width: 9px; height: 9px; border-radius: 50%; background: #dfdfdf; }
.pager i:first-child { width: 18px; height: 18px; background: #c4c4c4; }
.chat header { display: flex; gap: 32px; padding: 17px 0 0 13px; }
.chat header .pager { margin-top: 8px; }
.back { width: 11px; height: 24px; }
.group-name { position: relative; width: 117px; height: 23px; margin: 11px 0 0 38px; font-family: Roboto, sans-serif; font-size: 11px; line-height: 23px; text-align: center; color: #fff; }
.message { display: flex; align-items: flex-start; padding-left: 13px; }
.avatar { width: 25px; height: 25px; margin-top: 9px; border-radius: 50%; }
.picture { width: 56px; height: 78px; margin-left: 13px; background: #e8e8e8; }
.stamp { width: 43px; height: 22px; margin: 26px 0 0 9px; padding: 5px 0 0 7px; font-family: Roboto, sans-serif; font-size: 6px; line-height: 7px; }
.message.first { margin-top: 44px; }
.message.second { margin-top: 17px; }
.message.tucked { margin-top: -23px; }
.message.third { margin-top: 22px; }
.divider { display: flex; align-items: center; gap: 7px; margin-top: 19px; padding-left: 38px; }
.divider hr { width: 40px; height: 1px; margin: 0; border: 0; background: #555; }
.divider i { width: 27px; height: 6px; }
.message.own { gap: 13px; margin-top: 18px; padding-left: 87px; }
.own .picture { margin: 0; background: #c4c4c4; }
.own .avatar { margin: 0; }
.composer { display: grid; place-items: center; height: 54px; background: #dcdcdc; }
.composer button { width: 41px; height: 26px; background: #fcfcfc; }

/* Camera */
.camera { padding-top: 17px; }
.close { width: 33px; height: 30px; margin-left: 14px; }
.finder { width: 157px; height: 306px; margin: 16px 0 10px 18px; }
.shutter { width: 38px; height: 38px; margin: 0 auto; border-radius: 50%; }

/* Feed */
.feed header { display: flex; align-items: center; gap: 9px; padding: 17px 0 0 34px; }
.search { width: 120px; height: 27px; }
.search.narrow { width: 92px; }
.add-post, .history { position: relative; width: 18px; height: 18px; border-radius: 50%; }
.add-post::before, .add-post::after { content: ""; position: absolute; background: #fff; }
.add-post::before { inset: 9px 4px 8px 5px; }
.add-post::after { inset: 5px 8px 4px 9px; }
.history span { position: absolute; top: 20px; left: 0; font-family: Roboto, sans-serif; font-size: 6px; line-height: 7px; }
.feed .pager { margin-top: 6px; padding-left: 56px; }
.stories { display: flex; justify-content: space-between; width: 103px; margin: 7px 0 34px 47px; }
.stories i { width: 18px; height: 18px; border-radius: 50%; background: #c4c4c4; }
.post { display: flex; align-items: flex-start; gap: 29px; padding-left: 11px; }
.face { width: 23px; height: 24px; }
.body { display: flex; flex-direction: column; padding-top: 2px; }
.line { width: 89px; height: 2px; margin-bottom: 4px; background: #c4c4c4; }
.short { width: 53px; }
.shots { display: flex; gap: 5px; margin-top: 6px; }
.shots.single { margin-top: 18px; align-items: flex-end; gap: 20px; }
.shots.loose { margin-top: 12px; }
.shots > i { width: 32px; height: 28px; background: #d6d6d6; }
.high > i { height: 40px; }
.shots > .tall { width: 44px; height: 50px; }
.tags { display: flex; gap: 3px; margin-bottom: -6px; }
.tags i { width: 9px; height: 8px; background: #c4c4c4; }
.tags.below { margin: 9px 0 0 64px; }
.after-tall { margin-top: 35px; }
.after-tags { margin-top: 21px; }
.after-high { margin-top: 26px; }

/* Keyboard */
.compose { padding-top: 30px; }
.canvas { width: 160px; height: 139px; margin-left: 19px; }
.send { width: 53px; height: 27px; margin: 24px 0 0 67px; }
.keyboard { display: flex; flex: none; flex-direction: column; gap: 6px; height: 154px; padding-top: 5px; background: #2e2e2e; font-family: Inter, sans-serif; color: #f4f4f4; }
.keys { display: flex; gap: 3px; padding: 0 2px; }
.keys button { display: grid; flex: 1; place-items: center; min-width: 0; height: 22px; border-radius: 2px; background: #646464; font-size: 12px; font-weight: 300; line-height: 22px; box-shadow: 0 1px 0 #222; }
.home-row { padding: 0 9px 0 11px; }
.shift-row { gap: 7px; padding: 0 1px; }
.letters { flex: 1; padding: 0; }
.keys .shift, .keys .erase { flex: none; width: 22px; }
.keys .shift { background: #d2d2d2; }
.keys .dark { background: #404040; }
.erase svg { fill: none; stroke: #f4f4f4; }
.last-row { gap: 4px; margin-top: 2px; padding: 0 1px; }
.last-row button { flex: 45; font-size: 8px; font-weight: 400; }
.last-row .space { flex: 95; }
.extras { display: flex; justify-content: space-between; padding: 8px 15px 0 14px; }
.extras svg { fill: none; stroke: #a0a0a0; }
.extras .solid { fill: #a0a0a0; stroke: none; }
.home-bar { width: 70px; height: 3px; margin: 0 auto; border-radius: 2px; background: #fff; }

/* Album */
.album-title { width: 74px; height: 14px; margin: 19px 0 13px 65px; }
.month { display: flex; gap: 6px; padding-left: 12px; }
.month-name { width: 41px; padding-left: 9px; font-size: 6px; line-height: 14px; }
.month i { width: 9px; }
.calendar { display: grid; grid-template-columns: repeat(7, 1fr); row-gap: 8px; justify-items: center; margin: 11px 11px 0 13px; }
.calendar i { width: 12px; height: 13px; border: 1px solid #111; }
.calendar .day { width: 14px; height: 14px; margin-bottom: -3px; border: 0; border-radius: 50%; background: #c4c4c4; }
.calendar .on { border: 0; background: #c4c4c4; }
.calendar .today { background: #000; }
.gallery { display: grid; grid-template-columns: 53px 62px 36px; row-gap: 21px; margin: 29px 0 0 21px; }
.gallery i { position: relative; width: 36px; height: 43px; background: #d6d6d6; }
.gallery i::before { content: ""; position: absolute; top: -2px; left: -4px; width: 15px; height: 15px; border-radius: 50%; background: #c4c4c4; }
.gallery i:nth-child(3n)::before { left: -10px; }
.month-rule { width: 41px; margin: 19px 0 0 12px; padding: 0 0 1px 5px; border-bottom: 2px solid #c4c4c4; font-size: 6px; line-height: 7px; }
.close-up { margin-top: 10px; }
.overlay { position: absolute; inset: 0; background: rgba(98, 98, 98, .26); }
.overlay i { position: absolute; background: #fff; }
.overlay .dialog { top: 104px; left: 17px; width: 158px; height: 208px; background: #f3f3f3; }
.overlay .portrait { top: 95px; left: 4px; width: 64px; height: 64px; border-radius: 50%; }
.overlay .badge { top: 61px; left: 87px; width: 26px; height: 26px; border-radius: 50%; }
.overlay .reply { top: 326px; left: 39px; width: 117px; height: 11px; }

/* Profile */
.profile { padding: 17px 26px 0 19px; }
.icons { display: flex; gap: 6px; }
.icons i { width: 17px; height: 15px; }
.person { display: flex; gap: 18px; margin-top: 10px; }
.head { width: 40px; height: 40px; border-radius: 50%; }
.names { display: grid; grid-template-columns: 37px 37px; gap: 10px 3px; align-content: start; padding-top: 11px; font-size: 6px; line-height: 12px; text-align: center; }
.names .user { grid-column: 1 / 3; width: 55px; line-height: 10px; }
.profile h2 { margin: 19px 0 7px 17px; }
.albums { display: flex; gap: 9px; }
.albums i { width: 62px; height: 36px; }
.albums i + i { flex: 1; }
.panel { position: relative; height: 54px; margin-top: 27px; }
.panel .text { position: absolute; white-space: pre; }
.favorite { top: -9px; left: 20px; }
.own-post { top: 5px; left: 10px; }
.invite { top: 38px; left: 8px; }
.privacy { top: 27px; left: 26px; }
```
